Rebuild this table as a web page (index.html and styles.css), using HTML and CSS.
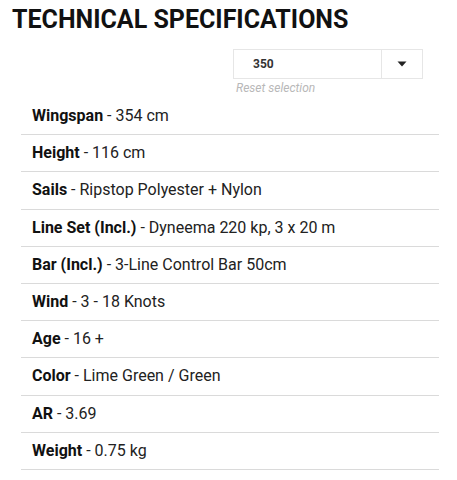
FILE: index.html
```html
<!DOCTYPE html>
<html>
<head>
<meta charset="utf-8">
<link rel="stylesheet" href="styles.css">
</head>
<body>
<div class="page">
  <h1 class="title">TECHNICAL SPECIFICATIONS</h1>
  <div class="picker">
    <div class="select">
      <div class="select-value">350</div>
      <div class="select-arrow">
        <svg width="10" height="6" viewBox="0 0 10 6"><path d="M0.5 0.5 H9.5 L5 5.5 Z" fill="#222"/></svg>
      </div>
    </div>
    <div class="reset">Reset selection</div>
  </div>
  <ul class="specs">
    <li class="spec"><b>Wingspan</b> - 354 cm</li>
    <li class="spec"><b>Height</b> - 116 cm</li>
    <li class="spec"><b>Sails</b> - Ripstop Polyester + Nylon</li>
    <li class="spec"><b>Line Set (Incl.)</b> - Dyneema 220 kp, 3 x 20 m</li>
    <li class="spec"><b>Bar (Incl.)</b> - 3-Line Control Bar 50cm</li>
    <li class="spec"><b>Wind</b> - 3 - 18 Knots</li>
    <li class="spec"><b>Age</b> - 16 +</li>
    <li class="spec"><b>Color</b> - Lime Green / Green</li>
    <li class="spec"><b>AR</b> - 3.69</li>
    <li class="spec"><b>Weight</b> - 0.75 kg</li>
  </ul>
</div>
</body>
</html>
```

FILE: styles.css
```css
html, body {
  margin: 0;
  padding: 0;
  background: #fff;
}
body {
  font-family: Roboto, "Liberation Sans", sans-serif;
  color: #222;
}
.page {
  width: 457px;
}
.title {
  margin: 5px 0 0 12px;
  font-size: 25px;
  line-height: 30px;
  font-weight: 700;
  color: #111;
}
.picker {
  display: flex;
  flex-direction: column;
  margin: 14px 0 0 233px;
  width: 190px;
}
.select {
  display: flex;
  height: 30px;
  box-sizing: border-box;
  border: 1px solid #e6e6e6;
}
.select-value {
  flex: 1;
  display: flex;
  align-items: center;
  padding-left: 19px;
  font-size: 12px;
  font-weight: 700;
  color: #333;
  border-right: 1px solid #e6e6e6;
}
.select-arrow {
  width: 40px;
  display: flex;
  align-items: center;
  justify-content: center;
}
.reset {
  margin-top: 2px;
  padding-left: 3px;
  font-size: 12px;
  line-height: 14px;
  font-style: italic;
  color: #b8b8b8;
}
.specs {
  list-style: none;
  margin: 3px 0 0 21px;
  padding: 0;
  width: 418px;
}
.spec {
  height: 36.2px;
  line-height: 36px;
  padding-left: 11px;
  border-bottom: 1px solid #dadada;
  font-size: 16px;
  color: #222;
}
.spec b {
  font-weight: 700;
  color: #111;
}
```
